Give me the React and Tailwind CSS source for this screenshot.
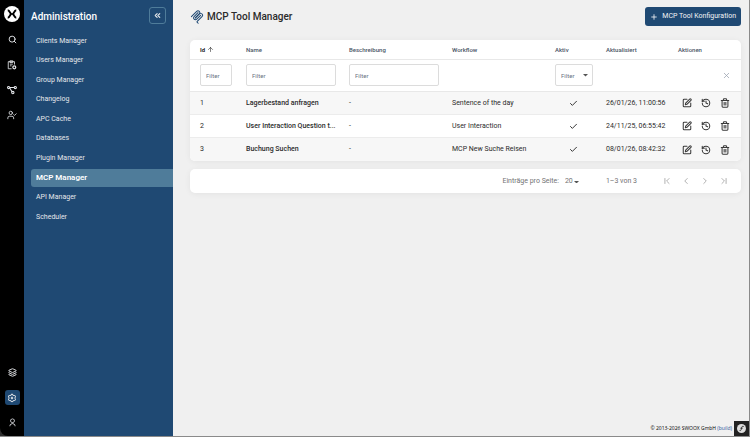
import {
  ArrowUp, Check, ChevronFirst, ChevronLast, ChevronLeft, ChevronRight, ChevronsLeft,
  History, Layers, Plus, Search, SquarePen, Trash2, UserCheck, X,
} from 'lucide-react';
import { RiUserLine, RiSettings3Line } from 'react-icons/ri';

const menu = [
  'Clients Manager', 'Users Manager', 'Group Manager', 'Changelog', 'APC Cache',
  'Databases', 'Plugin Manager', 'MCP Manager', 'API Manager', 'Scheduler',
];

const tools = [
  { id: 1, name: 'Lagerbestand anfragen', workflow: 'Sentence of the day', updated: '26/01/26, 11:00:56' },
  { id: 2, name: 'User Interaction Question t...', workflow: 'User Interaction', updated: '24/11/25, 06:55:42' },
  { id: 3, name: 'Buchung Suchen', workflow: 'MCP New Suche Reisen', updated: '08/01/26, 08:42:32' },
];

function Logo() {
  return (
    <svg viewBox="0 0 30 30" className="size-4">
      <circle cx="15" cy="15" r="15" fill="#fff" />
      <path d="M7 8c3 0 4 4 6 7-2 3-3 7-6 7M23 8c-3 0-4 4-6 7 2 3 3 7 6 7" fill="none" stroke="#000" strokeWidth="3.800" />
      <path d="M12 15h6" stroke="#000" strokeWidth="2.500" />
    </svg>
  );
}

function ClipboardIcon() {
  return (
    <svg viewBox="0 0 24 24" className="size-[10px]" fill="none" stroke="currentColor" strokeWidth="2">
      <path d="M11 21H3V4h15v7" />
      <path d="M7 2h7v4H7zM7 10h7M7 14h4" />
      <circle cx="17.500" cy="17.500" r="3.500" strokeWidth="3" />
    </svg>
  );
}

function WorkflowIcon() {
  return (
    <svg viewBox="0 0 24 24" className="size-[10px]" fill="none" stroke="currentColor" strokeWidth="2.600">
      <circle cx="4" cy="6" r="2.600" />
      <circle cx="20" cy="6" r="2.600" />
      <circle cx="14" cy="18" r="2.800" />
      <path d="M7 6h10M7 8l5 8" />
    </svg>
  );
}

function McpIcon() {
  return (
    <svg viewBox="0 0 180 180" className="size-[14px]" fill="none" stroke="#1f4973" strokeWidth="13" strokeLinecap="round">
      <path d="M18 84.850 85.880 16.970c9.370-9.370 24.570-9.370 33.940 0 9.370 9.370 9.370 24.570 0 33.940L68.560 102.180" />
      <path d="M69.270 101.470 119.820 50.910c9.370-9.370 24.570-9.370 33.940 0l.360.360c9.370 9.370 9.370 24.570 0 33.940L92.720 146.600c-3.120 3.120-3.120 8.190 0 11.310l12.610 12.610" />
      <path d="M102.850 33.940 52.650 84.150c-9.370 9.370-9.370 24.570 0 33.940 9.370 9.370 24.570 9.370 33.940 0l50.200-50.210" />
    </svg>
  );
}

function RailButton({ label, active, children }) {
  return (
    <button
      aria-label={label}
      className={`flex size-[15px] items-center justify-center rounded-[3px] text-gray-200 ${active ? 'bg-[#1f4973]' : ''}`}
    >
      {children}
    </button>
  );
}

function Rail() {
  return (
    <nav className="flex w-6 shrink-0 flex-col items-center justify-between rounded-bl-lg bg-black py-[6px]">
      <div className="flex flex-col items-center gap-[10px]">
        <Logo />
        <RailButton label="Suche"><Search className="size-[9px]" strokeWidth={2.5} /></RailButton>
        <RailButton label="Aufgaben"><ClipboardIcon /></RailButton>
        <RailButton label="Workflows"><WorkflowIcon /></RailButton>
        <RailButton label="Benutzer"><UserCheck className="size-[10px]" /></RailButton>
      </div>
      <div className="flex flex-col items-center gap-[10px]">
        <RailButton label="Ebenen"><Layers className="size-[9px]" strokeWidth={2.5} /></RailButton>
        <RailButton label="Administration" active><RiSettings3Line className="size-[10px]" /></RailButton>
        <RailButton label="Profil"><RiUserLine className="size-[9px]" /></RailButton>
      </div>
    </nav>
  );
}

function Sidebar() {
  return (
    <aside className="w-[149px] shrink-0 bg-[#1f4973] pl-[7px] text-gray-200">
      <div className="flex items-end justify-between pt-[7px] pr-[7px]">
        <h2 className="text-[10px] leading-[14px] font-medium text-white">Administration</h2>
        <button aria-label="Menü einklappen" className="flex size-[17px] items-center justify-center rounded-[3px] border border-[#4f7c9a]">
          <ChevronsLeft className="size-[9px]" strokeWidth={3} />
        </button>
      </div>
      <ul className="mt-2 flex h-[194px] flex-col justify-between">
        {menu.map((item) => (
          <li key={item}>
            <a
              href="#"
              className={`flex h-[18px] items-center rounded-l-[3px] pl-[5px] ${item === 'MCP Manager' ? 'bg-[#4f7c9a] text-[8px] font-semibold text-white' : 'text-[7px]'}`}
            >
              {item}
            </a>
          </li>
        ))}
      </ul>
    </aside>
  );
}

function ToolTable() {
  const filter = 'h-[22px] w-full rounded-[2px] border border-[#dcdcdc] bg-white px-[5px] text-[6px] text-gray-500 placeholder:text-gray-500';
  return (
    <div className="overflow-hidden rounded-[5px] bg-white shadow-[0_1px_6px_rgba(0,0,0,0.06)]">
      <table className="w-full table-fixed text-left text-[7px] leading-[11px] text-[#2b2b2b]">
        <colgroup>
          <col className="w-[46px]" />
          <col className="w-[103px]" />
          <col className="w-[103px]" />
          <col className="w-[103px]" />
          <col className="w-[51px]" />
          <col className="w-[72px]" />
          <col className="w-[73px]" />
        </colgroup>
        <thead>
          <tr className="h-[19px] border-b border-[#e8e8e8] text-[6px] text-gray-600 *:pt-px *:pl-[10px] *:font-medium">
            <th>
              <span className="flex items-center gap-[2px] font-bold text-[#2b2b2b]">Id <ArrowUp className="size-[7px]" /></span>
            </th>
            <th>Name</th>
            <th>Beschreibung</th>
            <th>Workflow</th>
            <th>Aktiv</th>
            <th>Aktualisiert</th>
            <th>Aktionen</th>
          </tr>
          <tr className="h-8 border-b border-[#e8e8e8] *:pl-[10px]">
            <td className="pr-1"><input aria-label="Id filtern" placeholder="Filter" className={filter} /></td>
            <td className="pr-[3px]"><input aria-label="Name filtern" placeholder="Filter" className={filter} /></td>
            <td className="pr-[3px]"><input aria-label="Beschreibung filtern" placeholder="Filter" className={filter} /></td>
            <td />
            <td className="pr-[3px]">
              <div className="relative">
                <select aria-label="Aktiv filtern" className={`${filter} appearance-none`}>
                  <option>Filter</option>
                </select>
                <svg viewBox="0 0 10 5" className="pointer-events-none absolute top-[10px] right-[5px] w-[5px]"><path d="M0 0h10L5 5z" fill="#555" /></svg>
              </div>
            </td>
            <td />
            <td>
              <button aria-label="Filter löschen" className="mr-[10px] ml-auto flex text-gray-400"><X className="size-[9px]" strokeWidth={2} /></button>
            </td>
          </tr>
        </thead>
        <tbody>
          {tools.map((tool) => (
            <tr key={tool.id} className="h-[23px] border-b border-[#ececec] odd:bg-[#f7f7f7] last:h-6 last:border-0 *:pt-px *:pl-[10px]">
              <td>{tool.id}</td>
              <td className="font-medium whitespace-nowrap">{tool.name}</td>
              <td>-</td>
              <td>{tool.workflow}</td>
              <td><Check className="ml-[14px] size-[9px]" strokeWidth={2.5} /></td>
              <td className="whitespace-nowrap">{tool.updated}</td>
              <td>
                <div className="flex items-center gap-[9px] pl-[4px] text-[#3a3a3a]">
                  <button aria-label="Bearbeiten"><SquarePen className="size-[10px]" strokeWidth={2.5} /></button>
                  <button aria-label="Verlauf"><History className="size-[10px]" strokeWidth={2.5} /></button>
                  <button aria-label="Löschen"><Trash2 className="size-[10px]" strokeWidth={2.5} /></button>
                </div>
              </td>
            </tr>
          ))}
        </tbody>
      </table>
    </div>
  );
}

function Pagination() {
  return (
    <div className="mt-2 flex h-6 items-center justify-end rounded-[5px] bg-white pr-3 text-[7px] text-neutral-500 shadow-[0_1px_6px_rgba(0,0,0,0.06)]">
      <label htmlFor="pageSize">Einträge pro Seite:</label>
      <div className="relative ml-[6px]">
        <select id="pageSize" className="w-[14px] appearance-none">
          <option>20</option>
        </select>
        <svg viewBox="0 0 10 5" className="pointer-events-none absolute top-[5px] right-0 w-[5px]"><path d="M0 0h10L5 5z" fill="#555" /></svg>
      </div>
      <span className="ml-[27px]">1–3 von 3</span>
      <div className="ml-[25px] flex gap-[9px] text-neutral-400">
        <button aria-label="Erste Seite"><ChevronFirst className="size-[10px]" /></button>
        <button aria-label="Vorherige Seite"><ChevronLeft className="size-[10px]" /></button>
        <button aria-label="Nächste Seite"><ChevronRight className="size-[10px]" /></button>
        <button aria-label="Letzte Seite"><ChevronLast className="size-[10px]" /></button>
      </div>
    </div>
  );
}

export default function App() {
  return (
    <div className="flex min-h-screen border-r border-b border-[#8a8a8a] bg-[#2e2e2e] font-['Roboto',sans-serif]">
      <Rail />
      <Sidebar />
      <main className="flex min-w-0 flex-1 flex-col bg-[#f0f0f0]">
        <div className="flex-1 pt-[7px] pr-2 pl-[17px]">
          <header className="mb-[14px] flex items-center justify-between">
            <h1 className="flex items-center gap-[3px] text-[10px] font-medium text-[#2b2b2b]"><McpIcon /> MCP Tool Manager</h1>
            <button className="flex h-[19px] items-center gap-1 rounded-[3px] bg-[#1f4973] px-[5px] text-[7px] text-gray-100">
              <Plus className="size-[8px]" strokeWidth={2.5} /> MCP Tool Konfiguration
            </button>
          </header>
          <ToolTable />
          <Pagination />
        </div>
        <footer className="flex items-center justify-end gap-[2px] font-['Open_Sans',sans-serif] text-[5px] text-black">
          <span>© 2013-2026 SWOOX GmbH <a href="#" className="text-[#1f5296]">(build)</a></span>
          <button aria-label="Debug" className="flex size-[15px] items-center justify-center bg-[#222]">
            <svg viewBox="0 0 16 16" className="size-[9px]">
              <circle cx="8" cy="8" r="8" fill="#ddd" />
              <path d="M12 4.500c-2-1.500-3.500 0-4 3s-1 5-3.500 4M6 7.500h4" fill="none" stroke="#222" strokeWidth="1.500" />
            </svg>
          </button>
        </footer>
      </main>
    </div>
  );
}
